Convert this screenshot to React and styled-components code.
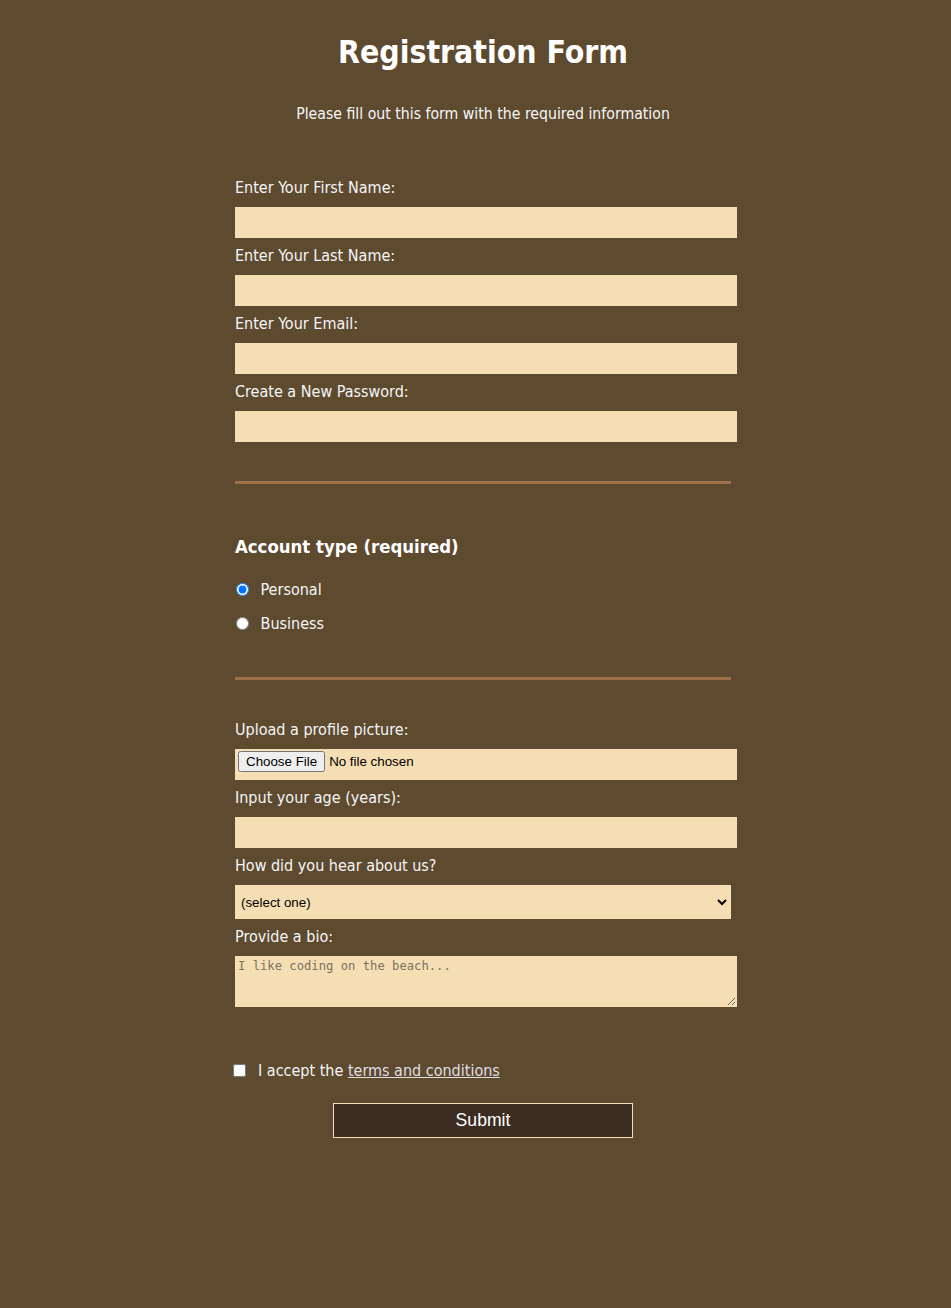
import React from "react";
import styled, { createGlobalStyle } from "styled-components";

const GlobalStyle = createGlobalStyle`
  body {
    margin: 0;
    background-color: #5e4a2f;
    color: #f5f6f7;
    font-family: "DejaVu Sans Condensed", "DejaVu Sans", sans-serif;
    font-size: 16px;
  }
`;

const Page = styled.div`
  min-height: 100vh;
  box-sizing: border-box;
  padding: 33px 0 0 15px;
`;

const Title = styled.h1`
  margin: 0;
  text-align: center;
  font-size: 31.7px;
  line-height: 39px;
  color: #ffffff;
`;

const Subtitle = styled.p`
  margin: 32px 0 0;
  text-align: center;
  font-size: 15.7px;
  line-height: 19px;
`;

const Form = styled.form`
  width: 500px;
  margin: 15px auto 0;
  padding-bottom: 32px;
`;

const Section = styled.fieldset`
  min-width: 0;
  margin: 0 2px;
  padding: 32px 0 ${(p) => p.$padBottom || 32}px;
  border: none;
  border-bottom: ${(p) => (p.$last ? "none" : "3px solid #9b7049")};
`;

const Label = styled.label`
  display: block;
  margin: 8px 0;
  line-height: 19px;
`;

const Field = styled.input`
  display: block;
  width: 100%;
  height: 27px;
  box-sizing: content-box;
  margin: 10px 0 0;
  padding: 1px 2px;
  border: 1px solid #f5deb3;
  background-color: #f5deb3;
  color: #000;
  font-family: "Liberation Sans", Arial, sans-serif;
  font-size: 13.33px;
`;

const Select = styled.select`
  display: block;
  width: 100%;
  height: 34px;
  box-sizing: border-box;
  margin: 10px 0 0;
  padding: 0 1px;
  border: 1px solid #f5deb3;
  background-color: #f5deb3;
  color: #000;
  font-family: "Liberation Sans", Arial, sans-serif;
  font-size: 13.33px;
`;

const Bio = styled.textarea`
  display: block;
  width: 100%;
  height: 45px;
  box-sizing: content-box;
  margin: 10px 0 0;
  padding: 2px;
  border: 1px solid #f5deb3;
  background-color: #f5deb3;
  color: #000;
  font-family: "DejaVu Sans Mono", monospace;
  font-size: 12.2px;

  &::placeholder {
    color: #7a7263;
  }
`;

const Legend = styled.div`
  margin: 19px 0 18px;
  font-size: 18.4px;
  line-height: 23px;
  font-weight: bold;
  color: #ffffff;
`;

const OptionRow = styled.label`
  display: flex;
  align-items: center;
  gap: 12px;
  height: 26px;
  margin: 8px 0;
`;

const Tick = styled.input`
  width: 13px;
  height: 13px;
  margin: 0 0 0 ${(p) => p.$offset || 0}px;
  flex-shrink: 0;
`;

const TermsRow = styled.label`
  display: flex;
  align-items: center;
  gap: 12px;
  height: 31px;
  margin: 8px 0 0;
`;

const TermsLink = styled.a`
  color: #dfdfe2;
`;

const Submit = styled.input`
  display: block;
  width: 300px;
  height: 35px;
  margin: 17px auto 16px;
  border: 1px solid #f5deb3;
  background-color: #3b2d22;
  color: #ffffff;
  font-family: "Liberation Sans", Arial, sans-serif;
  font-size: 17.6px;
`;

const App = () => {
  return (
    <Page>
      <GlobalStyle />
      <Title>Registration Form</Title>
      <Subtitle>Please fill out this form with the required information</Subtitle>
      <Form onSubmit={(e) => e.preventDefault()}>
        <Section $padBottom={31}>
          <Label>
            Enter Your First Name:
            <Field type="text" />
          </Label>
          <Label>
            Enter Your Last Name:
            <Field type="text" />
          </Label>
          <Label>
            Enter Your Email:
            <Field type="email" />
          </Label>
          <Label>
            Create a New Password:
            <Field type="password" />
          </Label>
        </Section>
        <Section $padBottom={33}>
          <Legend>Account type (required)</Legend>
          <OptionRow>
            <Tick type="radio" name="account-type" defaultChecked $offset={0.5} />
            Personal
          </OptionRow>
          <OptionRow>
            <Tick type="radio" name="account-type" $offset={0.5} />
            Business
          </OptionRow>
        </Section>
        <Section $last>
          <Label>
            Upload a profile picture:
            <Field type="file" />
          </Label>
          <Label>
            Input your age (years):
            <Field type="number" min="13" max="120" />
          </Label>
          <Label>
            How did you hear about us?
            <Select defaultValue="">
              <option value="">(select one)</option>
              <option value="1">freeCodeCamp News</option>
              <option value="2">freeCodeCamp YouTube Channel</option>
              <option value="3">freeCodeCamp Forum</option>
              <option value="4">Other</option>
            </Select>
          </Label>
          <Label>
            Provide a bio:
            <Bio rows="3" cols="30" placeholder="I like coding on the beach..." />
          </Label>
        </Section>
        <TermsRow>
          <Tick type="checkbox" />
          <span>
            I accept the <TermsLink href="#">terms and conditions</TermsLink>
          </span>
        </TermsRow>
        <Submit type="submit" value="Submit" />
      </Form>
    </Page>
  );
};

export default App;
